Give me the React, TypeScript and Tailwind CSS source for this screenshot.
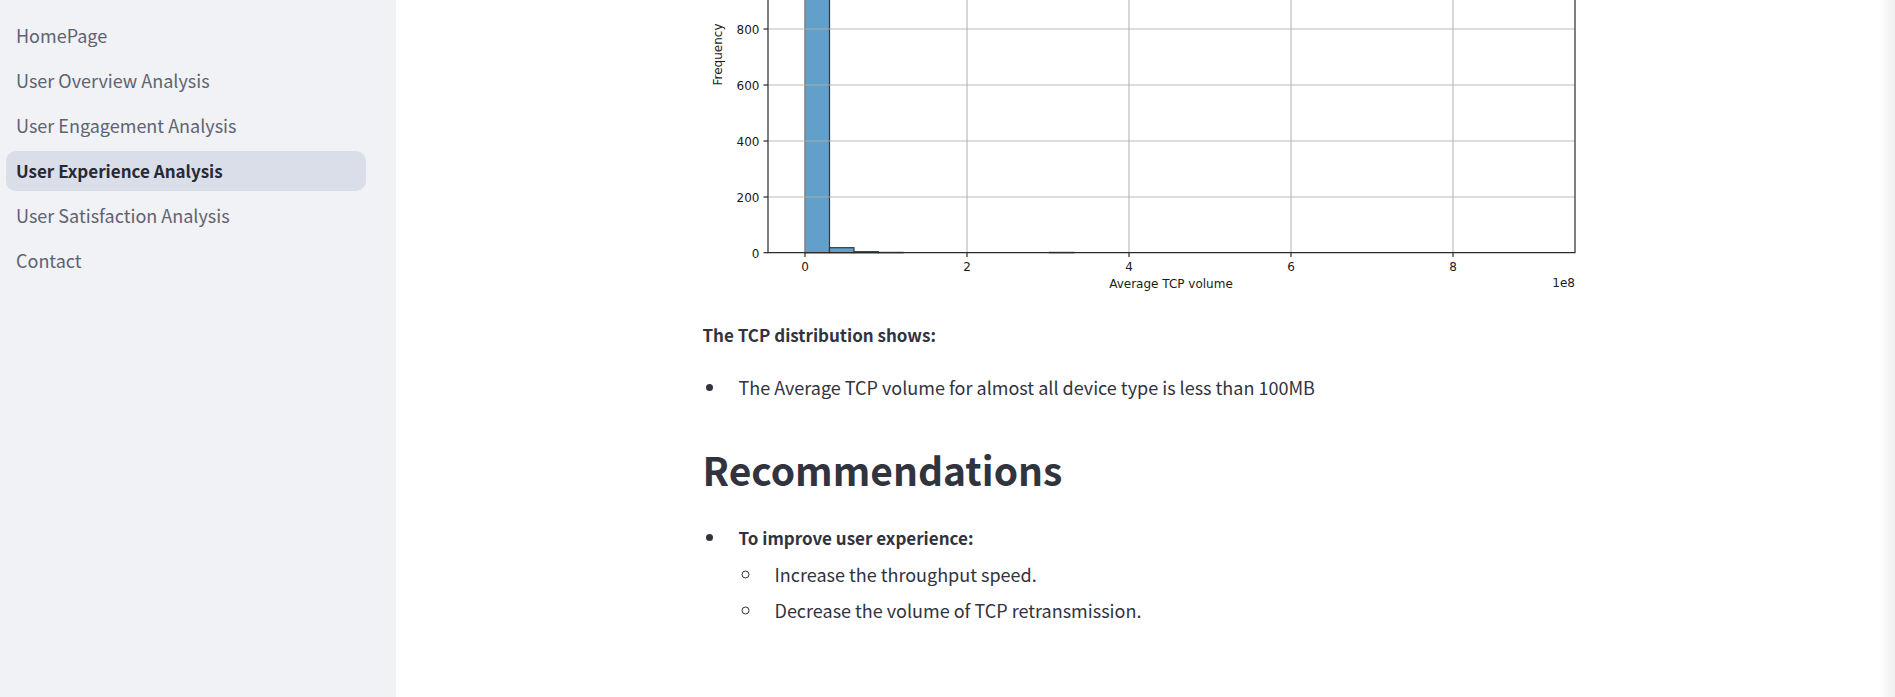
const pages = [
  'HomePage',
  'User Overview Analysis',
  'User Engagement Analysis',
  'User Experience Analysis',
  'User Satisfaction Analysis',
  'Contact',
];
const current = 'User Experience Analysis';

const xTicks = [
  { label: '0', x: 102 },
  { label: '2', x: 264 },
  { label: '4', x: 426 },
  { label: '6', x: 588 },
  { label: '8', x: 750 },
];
const yTicks = [
  { label: '800', y: 29 },
  { label: '600', y: 85 },
  { label: '400', y: 141 },
  { label: '200', y: 197 },
  { label: '0', y: 252.7 },
];
const bars = [
  { x: 102, width: 24.5, y: -20 },
  { x: 126.5, width: 24.5, y: 247.7 },
  { x: 151, width: 24.5, y: 251.7 },
  { x: 175.5, width: 24.5, y: 252.4 },
  { x: 346.5, width: 24.5, y: 252.4 },
];

function Histogram() {
  return (
    <svg
      viewBox="0 0 886 304"
      role="img"
      aria-label="Histogram of average TCP volume"
      className="block w-full font-['DejaVu_Sans',sans-serif] text-[12px]"
      fill="#1a1a1a"
    >
      <g fill="#629fca" stroke="#2b3a45" strokeWidth="1.2">
        {bars.map((b) => (
          <rect key={b.x} x={b.x} y={b.y} width={b.width} height={252.7 - b.y} />
        ))}
      </g>
      <g stroke="#b0b0b0" strokeOpacity="0.85" strokeWidth="1.2">
        {xTicks.map((t) => (
          <line key={t.label} x1={t.x} x2={t.x} y1="0" y2="252" />
        ))}
        {yTicks.slice(0, 4).map((t) => (
          <line key={t.label} x1="65" x2="872" y1={t.y} y2={t.y} />
        ))}
      </g>
      <g stroke="#2a2a2a" strokeWidth="1.2">
        <path d="M65 0V252.7H872V0" fill="none" />
        {xTicks.map((t) => (
          <line key={t.label} x1={t.x} x2={t.x} y1="252.7" y2="257" />
        ))}
        {yTicks.map((t) => (
          <line key={t.label} x1="60.5" x2="65" y1={t.y} y2={t.y} />
        ))}
      </g>
      {xTicks.map((t) => (
        <text key={t.label} x={t.x} y="271" textAnchor="middle">
          {t.label}
        </text>
      ))}
      {yTicks.map((t) => (
        <text key={t.label} x="56.5" y={t.y + 5} textAnchor="end">
          {t.label}
        </text>
      ))}
      <text x="468" y="288" textAnchor="middle">
        Average TCP volume
      </text>
      <text x="872" y="287" textAnchor="end">
        1e8
      </text>
      <text transform="translate(19 54.5) rotate(-90)" textAnchor="middle">
        Frequency
      </text>
    </svg>
  );
}

export default function App() {
  return (
    <div className="relative flex min-h-screen bg-white font-['Source_Sans_Pro','Noto_Sans_CJK_SC',sans-serif] text-[18px] text-[#31333f]">
      <aside className="w-[396px] shrink-0 bg-[#f0f2f6]">
        <nav className="flex flex-col gap-[5px] pt-4 pr-[30px] pl-[6px]">
          {pages.map((page) => (
            <a
              key={page}
              href="#"
              aria-current={page === current ? 'page' : undefined}
              className={
                page === current
                  ? 'rounded-[10px] bg-[#dadee9] px-[10px] text-[17px] leading-10 font-semibold text-[#262936]'
                  : 'rounded-[10px] px-[10px] pb-[2px] leading-[38px] text-[#5f6270]'
              }
            >
              {page}
            </a>
          ))}
        </nav>
      </aside>
      <main className="flex grow justify-center">
        <article className="w-full max-w-[886px]">
          <Histogram />
          <p className="mt-[15px] text-[17px] leading-8 font-semibold">The TCP distribution shows:</p>
          <ul className="mt-5 list-disc pl-6 leading-8">
            <li className="pl-3">The Average TCP volume for almost all device type is less than 100MB</li>
          </ul>
          <h1 className="mt-9 text-[39px] leading-[60px] font-semibold">Recommendations</h1>
          <ul className="mt-5 list-disc pl-6 leading-9">
            <li className="pl-3">
              <strong className="text-[17px] font-semibold">To improve user experience:</strong>
              <ul className="list-[circle] pl-6">
                <li className="pl-3">Increase the throughput speed.</li>
                <li className="pl-3">Decrease the volume of TCP retransmission.</li>
              </ul>
            </li>
          </ul>
        </article>
      </main>
      <div className="pointer-events-none absolute inset-y-0 right-0 w-4 bg-linear-to-r from-transparent to-[#efefef]" />
    </div>
  );
}
